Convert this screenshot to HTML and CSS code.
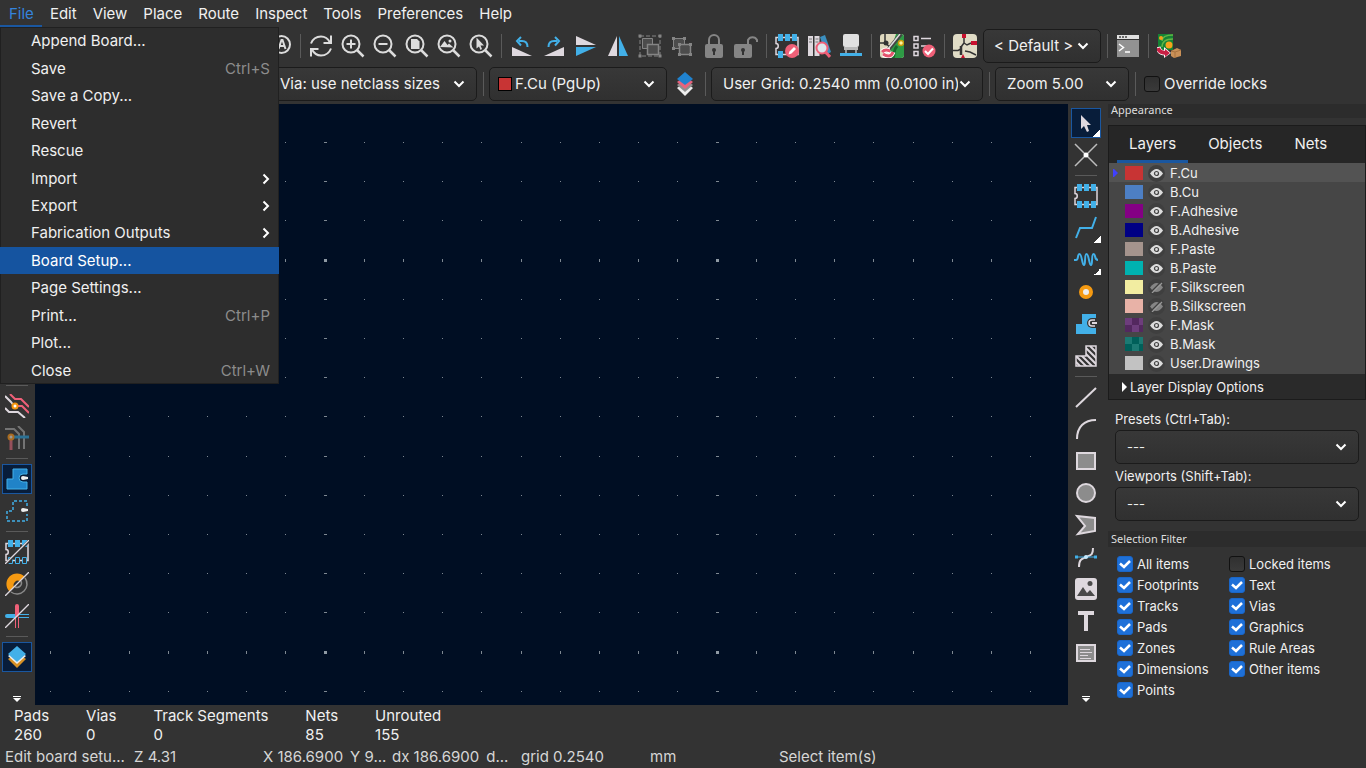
FILE: index.html
```
<!DOCTYPE html>
<html lang="en">
<head>
<meta charset="utf-8">
<title>PCB Editor</title>
<link rel="stylesheet" href="styles.css">
</head>
<body>
<div class="app">
  <nav class="menubar">
    <button class="menu-title open">File</button>
    <button class="menu-title">Edit</button>
    <button class="menu-title">View</button>
    <button class="menu-title">Place</button>
    <button class="menu-title">Route</button>
    <button class="menu-title">Inspect</button>
    <button class="menu-title">Tools</button>
    <button class="menu-title">Preferences</button>
    <button class="menu-title">Help</button>
    <div class="dropdown">
      <button class="item">Append Board...</button>
      <button class="item">Save<span class="key">Ctrl+S</span></button>
      <button class="item">Save a Copy...</button>
      <button class="item">Revert</button>
      <button class="item">Rescue</button>
      <button class="item">Import<svg class="sub" viewBox="0 0 8 12"><path d="M1.500 1.500 6 6l-4.500 4.500"/></svg></button>
      <button class="item">Export<svg class="sub" viewBox="0 0 8 12"><path d="M1.500 1.500 6 6l-4.500 4.500"/></svg></button>
      <button class="item">Fabrication Outputs<svg class="sub" viewBox="0 0 8 12"><path d="M1.500 1.500 6 6l-4.500 4.500"/></svg></button>
      <button class="item active">Board Setup...</button>
      <button class="item">Page Settings...</button>
      <button class="item">Print...<span class="key">Ctrl+P</span></button>
      <button class="item">Plot...</button>
      <button class="item">Close<span class="key">Ctrl+W</span></button>
    </div>
  </nav>

  <div class="toolbar main-tools">
    <button class="tool" aria-label="Find and replace"><svg viewBox="0 0 24 24" fill="none" stroke="#dcdcdc" stroke-width="2"><circle cx="13.500" cy="10.500" r="8.500"/><path d="M10.500 15l3-9h1l3 9M11.500 12h5M7 17l-5 5"/></svg></button>
    <span class="sep"></span>
    <button class="tool" aria-label="Refresh"><svg viewBox="0 0 24 24" fill="none" stroke="#dcdcdc" stroke-width="2"><path d="M2 9.500C4 4.500 8 2.500 12 2.500c4 0 7 2 9 6M22 1.500v7.500h-7.500M22 14.500c-2 5-6 7-10 7s-7-2-9-6M2 22.500V15h7.500"/></svg></button>
    <button class="tool" aria-label="Zoom in"><svg viewBox="0 0 24 24" fill="none" stroke="#dcdcdc" stroke-width="2"><circle cx="10" cy="10" r="8.500"/><path d="M10 5.500v9M5.500 10h9"/><path d="M16 16l6.500 6.500" stroke-width="2.500"/></svg></button>
    <button class="tool" aria-label="Zoom out"><svg viewBox="0 0 24 24" fill="none" stroke="#dcdcdc" stroke-width="2"><circle cx="10" cy="10" r="8.500"/><path d="M5.500 10h9"/><path d="M16 16l6.500 6.500" stroke-width="2.500"/></svg></button>
    <button class="tool" aria-label="Zoom to page"><svg viewBox="0 0 24 24" fill="none" stroke="#dcdcdc" stroke-width="2"><circle cx="10" cy="10" r="8.500"/><path d="M6 5h6l2.500 2.500V15H6z" fill="#dcdcdc" stroke="none"/><path d="M16 16l6.500 6.500" stroke-width="2.500"/></svg></button>
    <button class="tool" aria-label="Zoom to objects"><svg viewBox="0 0 24 24" fill="none" stroke="#dcdcdc" stroke-width="2"><circle cx="10" cy="10" r="8.500"/><path d="M3 13l4.500-6 3 4 1.500-1.500L16.500 13.500z" fill="#dcdcdc" stroke="none"/><circle cx="13" cy="7" r="1.500" fill="#dcdcdc" stroke="none"/><path d="M16 16l6.500 6.500" stroke-width="2.500"/></svg></button>
    <button class="tool" aria-label="Zoom to selection"><svg viewBox="0 0 24 24" fill="none" stroke="#dcdcdc" stroke-width="2"><circle cx="10" cy="10" r="8.500"/><path d="M7.500 3.500v11l2.500-2 1.500 3.500 1.500-1-1.500-3.500h3.500z" fill="#dcdcdc" stroke="none"/><path d="M16 16l6.500 6.500" stroke-width="2.500"/></svg></button>
    <span class="sep"></span>
    <button class="tool" aria-label="Rotate counterclockwise"><svg viewBox="0 0 24 24" fill="none"><path d="M2 13v9h20z" fill="#ded8de"/><path d="M9 7h3c4 0 5.500 2 5.500 6" stroke="#42b0e8" stroke-width="2"/><path d="M11 3L7 7l4 4.500" stroke="#42b0e8" stroke-width="2"/></svg></button>
    <button class="tool" aria-label="Rotate clockwise"><svg viewBox="0 0 24 24" fill="none"><path d="M22 13v9H2z" fill="#ded8de"/><path d="M15 7h-3c-4 0-5.500 2-5.500 6" stroke="#42b0e8" stroke-width="2"/><path d="M13 3l4 4-4 4.500" stroke="#42b0e8" stroke-width="2"/></svg></button>
    <button class="tool" aria-label="Mirror vertically"><svg viewBox="0 0 24 24"><path d="M2 2l20 9H2z" fill="#ded8de"/><path d="M2 13h20L2 22z" fill="#42b0e8"/></svg></button>
    <button class="tool" aria-label="Mirror horizontally"><svg viewBox="0 0 24 24"><path d="M11 2v20H2z" fill="#ded8de"/><path d="M13 2v20h9z" fill="#42b0e8"/></svg></button>
    <button class="tool" aria-label="Group"><svg viewBox="0 0 24 24" fill="#4c4c4c" stroke="#858585"><path d="M2 2h20v20H2z" fill="none" stroke-dasharray="4 2"/><path d="M4.500 4.500h10v10h-10z"/><path d="M9.500 10.500h11v10h-11z" stroke-width="1.500"/><path d="M.5.500h3v3h-3zM20.500.500h3v3h-3zM.5 20.500h3v3h-3zM20.500 20.500h3v3h-3z" fill="#858585" stroke="none"/></svg></button>
    <button class="tool" aria-label="Ungroup"><svg viewBox="0 0 24 24" fill="#4c4c4c" stroke="#858585"><path d="M3.500 4.500h11v10h-11z"/><path d="M9.500 10.500h11v10h-11z" stroke-width="1.500"/><path d="M2 3h3v3H2zM13 3h3v3h-3zM2 13h3v3H2zM8 9h3v3H8zM19 9h3v3h-3zM8 19h3v3H8zM19 19h3v3h-3z" fill="#858585" stroke="none"/></svg></button>
    <button class="tool" aria-label="Lock"><svg viewBox="0 0 24 24"><path d="M7 11V6a5 5 0 0 1 10 0v5" fill="none" stroke="#858585" stroke-width="2"/><rect x="3" y="10" width="18" height="14" rx="2" fill="#858585"/><circle cx="12" cy="16" r="2" fill="#333"/><path d="M11 16h2v5h-2z" fill="#333"/></svg></button>
    <button class="tool" aria-label="Unlock"><svg viewBox="0 0 24 24"><path d="M14 11V6a5 5 0 0 1 9 0v2" fill="none" stroke="#858585" stroke-width="2"/><rect x="0" y="10" width="18" height="14" rx="2" fill="#858585"/><circle cx="9" cy="16" r="2" fill="#333"/><path d="M8 16h2v5H8z" fill="#333"/></svg></button>
    <span class="sep"></span>
    <button class="tool" aria-label="Footprint editor"><svg viewBox="0 0 24 24"><path d="M1 3.500h22v17H1v-6c3 0 3-5 0-5z" fill="none" stroke="#ded8de" stroke-width="1.500"/><path d="M3 0h5v7H3zM10 0h5v7h-5zM17 0h5v7h-5zM3 17h5v7H3z" fill="#42b0e8"/><circle cx="17" cy="17" r="7" fill="#ef6078"/><path d="M13.500 20.500l1-3 4.500-4.500 2 2-4.500 4.500z" fill="#fff"/></svg></button>
    <button class="tool" aria-label="Footprint library browser"><svg viewBox="0 0 24 24"><path d="M1 2h5v20H1zM7.500 2h5v20h-5z" fill="#ded8de"/><path d="M2 5h3M2 8h3M8.500 5h3M8.500 8h3" stroke="#777"/><path d="M13 3l5-2 6 17-5 3z" fill="#3b8fc0"/><circle cx="15" cy="14" r="5.500" fill="#dce7ed" stroke="#ef6078" stroke-width="2"/><path d="M18.500 18l4.500 5" stroke="#ef6078" stroke-width="3"/></svg></button>
    <button class="tool" aria-label="3D viewer"><svg viewBox="0 0 24 24"><rect x="4" y="0" width="16" height="13" rx="2" fill="#e0e0e0"/><path d="M5 13h14v3H5z" fill="#b9b9b9"/><path d="M7 16v6M17 16v6" stroke="#b9b9b9" stroke-width="1.500"/><path d="M1 19h22v3H1z" fill="#42b0e8"/></svg></button>
    <span class="sep"></span>
    <button class="tool" aria-label="Update PCB from schematic"><svg viewBox="0 0 24 24"><rect width="24" height="24" rx="3" fill="#ded8bd"/><path d="M16 0h5a3 3 0 0 1 3 3v18a3 3 0 0 1-3 3H8z" fill="#2e9b45"/><path d="M17 12c-4 4-2 8-4 12" fill="none" stroke="#176b2a" stroke-width="3"/><path d="M5 0v9H0m5 0l5 4" fill="none" stroke="#333" stroke-width="1.500"/><circle cx="6" cy="9" r="2.500" fill="#333"/><path d="M21 0L8 16" stroke="#444" stroke-width="4"/><path d="M20 0L8 15" stroke="#ddd" stroke-width="1.500"/><circle cx="21" cy="9" r="2.500" fill="#fff3a0" stroke="#c89b0a" stroke-width="1.500"/><path d="M2 18c4-4 7-1 8-1M13 18c-2 6-7 4-10 2" fill="none" stroke="#fff" stroke-width="5"/><path d="M2 18c4-4 7-1 8-1M13 18c-2 6-7 4-10 2" fill="none" stroke="#e5536d" stroke-width="3"/></svg></button>
    <button class="tool" aria-label="Design rules checker"><svg viewBox="0 0 24 24" fill="none" stroke="#ded8de" stroke-width="1.500"><path d="M2 2.500h4v4H2zM2 10h4v4H2zM2 17.500h4v4H2zM9 4.500h10M9 12h6"/><circle cx="17" cy="17" r="6.500" fill="#ef6078" stroke="none"/><path d="M13 17l3 3 5-5.500" stroke="#fff" stroke-width="2"/></svg></button>
    <span class="sep"></span>
    <button class="tool" aria-label="Schematic editor"><svg viewBox="0 0 24 24"><rect width="24" height="24" rx="4" fill="#e0dcc6"/><path d="M11 4v5l-3 4M8 15l-3 1.500H0M12 17l5 1 6 3" fill="none" stroke="#333" stroke-width="1.500"/><path d="M8 12v9" stroke="#333" stroke-width="2.500"/><path d="M9 0h4v4H9zM18 7h6v4h-6z" fill="#c8102e"/><path d="M8 24l2-4 2 4z" fill="#c8102e"/><path d="M11 9l3 2 4-2" fill="none" stroke="#333" stroke-width="1.500"/></svg></button>
    <select class="combo variant" aria-label="Variant"><option>&lt; Default &gt;</option></select>
    <span class="sep"></span>
    <button class="tool" aria-label="Scripting console"><svg viewBox="0 0 24 24"><path d="M1 1h22v4H1z" fill="#e0e0e0"/><path d="M3 3h2M6 3h2M9 3h2" stroke="#444" stroke-width="1.500"/><path d="M1 6h22v17H1z" fill="#929292"/><path d="M3 10l4.500 3.500L3 17M9 18h5" fill="none" stroke="#fff" stroke-width="1.500"/></svg></button>
    <span class="sep"></span>
    <button class="tool" aria-label="Export package"><svg viewBox="0 0 24 24"><path d="M1 0h15v16H1z" fill="#168334"/><path d="M5 7c0-5 5-6 11-6M5 13c0-6 5-8 11-8" fill="none" stroke="#62b545" stroke-width="1.500"/><circle cx="4" cy="4" r="2" fill="#f5a21b"/><circle cx="12" cy="11" r="3.500" fill="#f5a21b"/><path d="M1 13c1 5 4 6 7 6" fill="none" stroke="#fff" stroke-width="5"/><path d="M7 13l7 6-7 5z" fill="#fff"/><path d="M1 14c1 4 4 5 8 5" fill="none" stroke="#c82045" stroke-width="4"/><path d="M8 15l5 4-5 4z" fill="#c82045"/><path d="M14 17l6-3 4 2v6l-7 2-3-2z" fill="#c99057"/><path d="M14 17l4 1 6-2M18 18v6" fill="none" stroke="#a87340"/></svg></button>
  </div>

  <div class="toolbar option-tools">
    <select class="combo via" aria-label="Via size"><option>Via: use netclass sizes</option></select>
    <span class="sep wide"></span>
    <span class="layer-combo">
      <select class="combo" aria-label="Active layer"><option>F.Cu (PgUp)</option></select>
      <span class="combo-swatch"></span>
    </span>
    <button class="tool" aria-label="Layer pair"><svg viewBox="0 0 24 24"><path d="M14 10l8 6-8 8-8-8z" fill="#eee"/><path d="M14 7l8 6-8 7-8-7z" fill="#8f8f8f"/><path d="M14 4l8 6-8 7-8-7z" fill="#e9637c"/><path d="M14 0l8 7-8 6-8-6z" fill="#2083d0"/></svg></button>
    <span class="sep wide"></span>
    <select class="combo grid" aria-label="Grid"><option>User Grid: 0.2540 mm (0.0100 in)</option></select>
    <span class="sep wide"></span>
    <select class="combo zoom" aria-label="Zoom"><option>Zoom 5.00</option></select>
    <span class="sep wide"></span>
    <label class="override"><input class="check" type="checkbox">Override locks</label>
  </div>

  <main class="workspace">
    <aside class="side left">
      <span class="hsep"></span>
      <button class="tool" aria-label="Show ratsnest"><svg viewBox="0 0 24 24" fill="none" stroke-width="2"><path d="M0 2l6 6 3 4M0 14l4 4h9l7 6" stroke="#ded8de"/><path d="M5 0l5 5h6l8 8M9 12h8l7 7" stroke="#ef6078"/><circle cx="10" cy="12" r="2.500" fill="#fff" stroke="#f5960f"/></svg></button>
      <button class="tool" aria-label="Curved ratsnest"><svg viewBox="0 0 24 24" fill="none" stroke-width="2"><path d="M0 3h9l5 5v15M13 0l6 6v17" stroke="#747474"/><path d="M6 12v12" stroke="#96505b" stroke-width="3"/><path d="M6 11h18" stroke="#2c7194" stroke-width="3"/><circle cx="6" cy="11" r="2.500" fill="#999" stroke="#a96c20"/></svg></button>
      <span class="hsep"></span>
      <button class="tool on" aria-label="Show filled zones"><svg viewBox="0 0 24 24"><path d="M8 2h14v5h-4a4 4 0 0 0 0 8h4v7H2V12h6z" fill="#2083c8" stroke="#42b0e8"/><path d="M18 9l5 1v2l-5 1a2 2 0 0 1 0-4z" fill="#eee"/></svg></button>
      <button class="tool" aria-label="Show zone outlines"><svg viewBox="0 0 24 24"><path d="M22 7V2H8v10H2v10h20v-7" fill="none" stroke="#42b0e8" stroke-width="1.500" stroke-dasharray="3 2"/><path d="M18 9l5 1v2l-5 1a2 2 0 0 1 0-4z" fill="#eee"/></svg></button>
      <span class="hsep"></span>
      <button class="tool" aria-label="Sketch footprints"><svg viewBox="0 0 24 24"><path d="M1 3.500h22v17H1v-6c3 0 3-5 0-5z" fill="none" stroke="#ded8de" stroke-width="1.500"/><path d="M3 0h5v7H3zM10 0h5v7h-5zM17 0h5v7h-5z" fill="#42b0e8"/><path d="M3.500 17.500h4v6h-4zM10.500 17.500h4v6h-4zM17.500 17.500h4v6h-4z" fill="#333" stroke="#42b0e8"/><path d="M1 24L24 1" stroke="#333" stroke-width="3"/><path d="M0 24L24 0" stroke="#ded8de" stroke-width="1.300"/></svg></button>
      <button class="tool" aria-label="Sketch vias"><svg viewBox="0 0 24 24"><path d="M4.500 19.500a10 10 0 0 1 15-15L15 9a4.500 4.500 0 0 0-6 6z" fill="#f59a12"/><path d="M20 6A10 10 0 0 1 6 20M16 9a4.500 4.500 0 0 1-6 6" fill="none" stroke="#898989" stroke-width="1.500"/><path d="M0 24L24 0" stroke="#ded8de" stroke-width="1.300"/></svg></button>
      <button class="tool" aria-label="Sketch tracks"><svg viewBox="0 0 24 24"><path d="M2 12h8" stroke="#42b0e8" stroke-width="4" stroke-linecap="round"/><path d="M12 2v9" stroke="#ef6078" stroke-width="4" stroke-linecap="round"/><path d="M13 10.500h11M13 13.500h11" stroke="#42b0e8"/><path d="M10.500 13v11M13.500 13v11" stroke="#ef6078"/><path d="M0 24L24 0" stroke="#ded8de" stroke-width="1.300"/></svg></button>
      <span class="hsep"></span>
      <button class="tool on" aria-label="Show appearance manager"><svg viewBox="0 0 24 24"><path d="M12 8l9 6-9 9-9-9z" fill="#d69125"/><path d="M12 5l9 6-9 8-9-8z" fill="#eee"/><path d="M12 1l9 8-9 8-9-8z" fill="#42b0e8"/></svg></button>
      <button class="more" aria-label="More tools"><svg viewBox="0 0 8 6"><path d="M0 0h8v1H0zM0 2h8L4 6z" fill="#fff"/></svg></button>
    </aside>

    <section class="board"><canvas id="board-grid" aria-label="Board drawing area"></canvas></section>

    <aside class="side right">
      <button class="tool on corner" aria-label="Select"><svg viewBox="0 0 24 24"><path d="M7 4v14l3-3 3 6 2-1-2-6h4z" fill="#ded8de"/></svg></button>
      <button class="tool" aria-label="Local ratsnest"><svg viewBox="0 0 24 24"><path d="M1 1l22 22M23 1L1 23" stroke="#bdbdbd" stroke-width="1.500"/><circle cx="12" cy="12" r="2.500" fill="#fff"/></svg></button>
      <span class="hsep"></span>
      <button class="tool" aria-label="Place footprints"><svg viewBox="0 0 24 24"><path d="M1 3.500h22v17H1v-6c3 0 3-5 0-5z" fill="none" stroke="#ded8de" stroke-width="1.500"/><path d="M3 0h5v7H3zM10 0h5v7h-5zM17 0h5v7h-5zM3 17h5v7H3zM10 17h5v7h-5zM17 17h5v7h-5z" fill="#42b0e8"/></svg></button>
      <button class="tool corner" aria-label="Route tracks"><svg viewBox="0 0 24 24"><path d="M2 22l4-10h12l4-11" fill="none" stroke="#42b0e8" stroke-width="2"/></svg></button>
      <button class="tool corner" aria-label="Tune length"><svg viewBox="0 0 24 24"><path d="M0 12h2c3 0 1-6 3.500-6S8 17 10 17 10 6 12.500 6 15 17 17 17s0-11 2.500-11S20 12 24 12" fill="none" stroke="#42b0e8" stroke-width="2"/></svg></button>
      <button class="tool" aria-label="Place vias"><svg viewBox="0 0 24 24"><circle cx="12" cy="12" r="5" fill="#eee" stroke="#f59a12" stroke-width="4"/></svg></button>
      <button class="tool" aria-label="Draw zones"><svg viewBox="0 0 24 24"><path d="M8 2h14v20H2V12h6z" fill="#42b0e8"/><path d="M22 6h-4a5 5 0 0 0 0 10h4z" fill="#333"/><path d="M21 8h-3a3 3 0 0 0 0 6h3" fill="none" stroke="#ded8de" stroke-width="1.500"/><path d="M18 10h5v2h-5z" fill="#ded8de"/></svg></button>
      <button class="tool" aria-label="Draw rule areas"><svg viewBox="0 0 24 24"><defs><clipPath id="area"><path d="M12 2h10v20H2V12h10z"/></clipPath></defs><g clip-path="url(#area)" stroke="#ded8de" stroke-width="2"><path d="M0 10l16 16M0 16l10 10M2 6l20 20M6 4l20 20M10 2l16 16M16 2l10 10"/></g><path d="M12 2h10v20H2V12h10z" fill="none" stroke="#ded8de" stroke-width="1.500"/></svg></button>
      <span class="hsep"></span>
      <button class="tool" aria-label="Draw lines"><svg viewBox="0 0 24 24"><path d="M2 22L22 3" stroke="#ded8de" stroke-width="2"/></svg></button>
      <button class="tool" aria-label="Draw arcs"><svg viewBox="0 0 24 24"><path d="M3 22C3 10 10 3 22 3" fill="none" stroke="#ded8de" stroke-width="2"/></svg></button>
      <button class="tool" aria-label="Draw rectangles"><svg viewBox="0 0 24 24"><path d="M3 4h18v16H3z" fill="#8c8c8c" stroke="#ded8de" stroke-width="2"/></svg></button>
      <button class="tool" aria-label="Draw circles"><svg viewBox="0 0 24 24"><circle cx="12" cy="12" r="9" fill="#8c8c8c" stroke="#ded8de" stroke-width="2"/></svg></button>
      <button class="tool" aria-label="Draw polygons"><svg viewBox="0 0 24 24"><path d="M3 3l18 2v13L4 21l7-8z" fill="#8c8c8c" stroke="#ded8de" stroke-width="2"/></svg></button>
      <button class="tool" aria-label="Draw bezier curves"><svg viewBox="0 0 24 24"><path d="M5 22c0-7 2-8 7-10s7-2 7-9" fill="none" stroke="#ded8de" stroke-width="2"/><path d="M2 12h20" stroke="#42b0e8"/><path d="M1 10.500h3v3H1zM20 10.500h3v3h-3z" fill="#42b0e8"/><circle cx="12" cy="12" r="2" fill="#c4eaff"/></svg></button>
      <button class="tool" aria-label="Place images"><svg viewBox="0 0 24 24"><rect x="1" y="1" width="22" height="22" rx="3" fill="#ded8de"/><path d="M3 19l6-9 4 6 3-3 5 6z" fill="#4a4a4a"/><circle cx="16" cy="6.500" r="2.500" fill="#4a4a4a"/></svg></button>
      <button class="tool" aria-label="Draw text"><svg viewBox="0 0 24 24"><path d="M4 4h16M12 4v18" fill="none" stroke="#ded8de" stroke-width="4"/></svg></button>
      <button class="tool" aria-label="Draw text boxes"><svg viewBox="0 0 24 24"><path d="M3 4h18v16H3z" fill="#8c8c8c" stroke="#ded8de" stroke-width="2"/><path d="M6 8.500h10M6 11.500h12M6 14.500h8M6 17.500h11" stroke="#ded8de"/></svg></button>
      <button class="more" aria-label="More tools"><svg viewBox="0 0 8 6"><path d="M0 0h8v1H0zM0 2h8L4 6z" fill="#fff"/></svg></button>
    </aside>

    <aside class="panel">
      <h2 class="caption">Appearance</h2>
      <div class="notebook">
        <div class="tabs"><button class="tab current">Layers</button><button class="tab">Objects</button><button class="tab">Nets</button></div>
        <ul class="layers">
          <li class="layer selected"><span class="swatch f-cu"></span><button class="eye" aria-label="Hide layer"></button>F.Cu</li>
          <li class="layer"><span class="swatch b-cu"></span><button class="eye" aria-label="Hide layer"></button>B.Cu</li>
          <li class="layer"><span class="swatch f-adhesive"></span><button class="eye" aria-label="Hide layer"></button>F.Adhesive</li>
          <li class="layer"><span class="swatch b-adhesive"></span><button class="eye" aria-label="Hide layer"></button>B.Adhesive</li>
          <li class="layer"><span class="swatch f-paste"></span><button class="eye" aria-label="Hide layer"></button>F.Paste</li>
          <li class="layer"><span class="swatch b-paste"></span><button class="eye" aria-label="Hide layer"></button>B.Paste</li>
          <li class="layer"><span class="swatch f-silk"></span><button class="eye off" aria-label="Show layer"></button>F.Silkscreen</li>
          <li class="layer"><span class="swatch b-silk"></span><button class="eye off" aria-label="Show layer"></button>B.Silkscreen</li>
          <li class="layer"><span class="swatch f-mask"></span><button class="eye" aria-label="Hide layer"></button>F.Mask</li>
          <li class="layer"><span class="swatch b-mask"></span><button class="eye" aria-label="Hide layer"></button>B.Mask</li>
          <li class="layer"><span class="swatch drawings"></span><button class="eye" aria-label="Hide layer"></button>User.Drawings</li>
        </ul>
        <button class="expander"><svg viewBox="0 0 5 10"><path d="M0 0l5 5-5 5z" fill="#fff"/></svg>Layer Display Options</button>
      </div>
      <div class="views">
        <label for="presets">Presets (Ctrl+Tab):</label>
        <select class="combo" id="presets"><option>---</option></select>
        <label for="viewports">Viewports (Shift+Tab):</label>
        <select class="combo" id="viewports"><option>---</option></select>
      </div>
      <h2 class="caption">Selection Filter</h2>
      <div class="filter">
        <label><input class="check" type="checkbox" checked>All items</label>
        <label><input class="check" type="checkbox">Locked items</label>
        <label><input class="check" type="checkbox" checked>Footprints</label>
        <label><input class="check" type="checkbox" checked>Text</label>
        <label><input class="check" type="checkbox" checked>Tracks</label>
        <label><input class="check" type="checkbox" checked>Vias</label>
        <label><input class="check" type="checkbox" checked>Pads</label>
        <label><input class="check" type="checkbox" checked>Graphics</label>
        <label><input class="check" type="checkbox" checked>Zones</label>
        <label><input class="check" type="checkbox" checked>Rule Areas</label>
        <label><input class="check" type="checkbox" checked>Dimensions</label>
        <label><input class="check" type="checkbox" checked>Other items</label>
        <label><input class="check" type="checkbox" checked>Points</label>
      </div>
    </aside>
  </main>

  <dl class="counts">
    <div><dt>Pads</dt><dd>260</dd></div>
    <div><dt>Vias</dt><dd>0</dd></div>
    <div><dt>Track Segments</dt><dd>0</dd></div>
    <div><dt>Nets</dt><dd>85</dd></div>
    <div><dt>Unrouted</dt><dd>155</dd></div>
  </dl>

  <footer class="status">
    <span>Edit board setu...</span>
    <span>Z 4.31</span>
    <span class="pair"><span>X 186.6900</span><span>Y 9...</span></span>
    <span class="pair"><span>dx 186.6900</span><span>d...</span></span>
    <span>grid 0.2540</span>
    <span>mm</span>
    <span>Select item(s)</span>
  </footer>
</div>
<script src="grid.js"></script>
</body>
</html>
```
FILE: styles.css
```
* { box-sizing: border-box; }

body {
  margin: 0;
  background: #333;
  color: #f0f0f0;
  font: 15px/20px Inter, sans-serif;
}

button, select, input {
  margin: 0;
  padding: 0;
  border: 0;
  background: none;
  color: inherit;
  font: inherit;
}

.app {
  display: grid;
  grid-template-rows: 28px 36px 40px 1fr 40px 23px;
  height: 100vh;
  min-height: 700px;
}

/* Menu bar */
.menubar { display: flex; position: relative; z-index: 5; }
.menu-title { height: 28px; padding: 2px 8px 0; border-bottom: 3px solid transparent; }
.menu-title.open { padding-left: 9px; color: #3584dc; border-color: #1a57a0; }

.dropdown {
  position: absolute;
  top: 27px;
  left: 0;
  width: 279px;
  height: 357px;
  display: grid;
  grid-auto-rows: 1fr;
  background: #2d2d2d;
  box-shadow: inset 0 0 0 1px #202020;
}
.item {
  display: flex;
  align-items: center;
  justify-content: space-between;
  padding: 1px 9px 0 31px;
  text-align: left;
}
.item.active { background: #1554a0; color: #fff; }
.key { color: #8c8c8c; }
.sub { width: 8px; height: 12px; fill: none; stroke: #fff; stroke-width: 2; }

/* Toolbars */
.toolbar { display: flex; align-items: center; }
.main-tools { padding-left: 264px; }
.option-tools { padding-left: 269px; }
.tool {
  flex: none;
  display: grid;
  place-items: center;
  width: 32px;
  height: 32px;
}
.tool svg { width: 24px; height: 24px; }
.sep { flex: none; width: 1px; height: 24px; margin: 0 4px; background: #5a5a5a; }
.sep.wide { margin: 0 5px 0 6px; }

.combo {
  appearance: none;
  height: 34px;
  padding: 0 24px 0 11px;
  border: 1px solid #1b1b1b;
  border-radius: 5px;
  background: url("data:image/svg+xml,%3Csvg xmlns='http://www.w3.org/2000/svg' width='12' height='8'%3E%3Cpath d='M1.500 1.500 6 6l4.500-4.500' fill='none' stroke='white' stroke-width='2'/%3E%3C/svg%3E") no-repeat right 11px center, linear-gradient(#383838, #303030);
}
.variant { width: 118px; margin: 0 2px; padding-left: 10px; }
.via { width: 208px; padding-left: 10px; }
.grid { width: 272px; }
.zoom { width: 134px; }
.layer-combo { position: relative; }
.layer-combo .combo { width: 178px; padding-left: 25px; }
.combo-swatch {
  position: absolute;
  left: 9px;
  top: 10px;
  width: 14px;
  height: 14px;
  border: 1px solid #000;
  background: #c83434;
  pointer-events: none;
}
.override { display: flex; align-items: center; gap: 4px; margin-left: 3px; }

.check {
  appearance: none;
  flex: none;
  width: 16px;
  height: 16px;
  border: 1px solid #111;
  border-radius: 3px;
  background: linear-gradient(#303030, #3a3a3a);
}
.check:checked {
  border-color: #1a66c8;
  background: url("data:image/svg+xml,%3Csvg xmlns='http://www.w3.org/2000/svg' width='14' height='14'%3E%3Cpath d='M2 6.500 6 10l6-6' fill='none' stroke='white' stroke-width='2.500'/%3E%3C/svg%3E") center, #1e70d8;
}

/* Workspace */
.workspace {
  display: grid;
  grid-template-columns: 35px 1fr 36px 262px;
  min-height: 0;
}
.side { display: flex; flex-direction: column; align-items: center; min-height: 0; }
.left { justify-content: flex-end; padding-right: 1px; }
.right { padding-top: 3px; }
.hsep { flex: none; width: 22px; height: 1px; margin: 4px 0; background: #5a5a5a; }
.side .tool.on {
  width: 30px;
  height: 30px;
  margin: 1px 0;
  border: 1px solid #1a57a0;
  background: #081d3a;
}
.corner {
  background: linear-gradient(135deg, transparent 50%, #fff 50%) no-repeat right 1px bottom 1px / 7px 7px;
}
.side .tool.on.corner {
  background: linear-gradient(135deg, transparent 50%, #fff 50%) no-repeat right bottom / 7px 7px, #081d3a;
}
.more { display: flex; align-items: flex-end; height: 32px; padding-bottom: 3px; margin-top: auto; }
.left .more { margin-top: 0; }
.more svg { width: 8px; height: 6px; }

.board { background: #000e23; min-width: 0; min-height: 0; overflow: hidden; }
.board canvas { display: block; width: 100%; height: 100%; }

/* Appearance panel */
.panel { padding-left: 4px; font-size: 13px; min-height: 0; overflow: hidden; }
.caption {
  margin: 0;
  padding: 0 3px;
  background: #2c2c2c;
  color: #dedede;
  font: 11px/16px "Noto Sans", sans-serif;
}
.caption:first-child { line-height: 12px; padding-bottom: 2px; }
.notebook { margin-top: 7px; border: 1px solid #1b1b1b; background: #2a2a2a; }
.tabs { display: flex; gap: 8px; height: 37px; padding-left: 8px; background: #262626; font-size: 15px; }
.tab { padding: 1px 12px 0; border-bottom: 3px solid transparent; }
.tab.current { border-color: #1a57a0; }
.layers { margin: 0; padding: 0 0 2px; list-style: none; background: #464646; }
.layer {
  display: flex;
  align-items: center;
  gap: 5px;
  height: 19px;
  padding: 1px 4px 0 16px;
  background: no-repeat left 4px center;
}
.layer.selected {
  background-color: #535353;
  background-image: url("data:image/svg+xml,%3Csvg xmlns='http://www.w3.org/2000/svg' width='5' height='8'%3E%3Cpath d='M0 0h1l4 4-4 4H0z' fill='%234040ff'/%3E%3C/svg%3E");
}
.swatch { width: 18px; height: 14px; }
.f-cu { background: #c83434; }
.b-cu { background: #4d7fc4; }
.f-adhesive { background: #840084; }
.b-adhesive { background: #000084; }
.f-paste { background: #a5948d; }
.b-paste { background: #00b2b0; }
.f-silk { background: #f2eda1; }
.b-silk { background: #e8b2a7; }
.f-mask { background: repeating-conic-gradient(#53285f 0 25%, #6d3d7c 0 50%) 0 0 / 14px 14px; }
.b-mask { background: repeating-conic-gradient(#1c7a73 0 25%, #00605a 0 50%) 7px 0 / 14px 14px; }
.drawings { background: #c2c2c2; }
.eye {
  width: 17px;
  height: 17px;
  border-radius: 50%;
  background: url("data:image/svg+xml,%3Csvg xmlns='http://www.w3.org/2000/svg' width='15' height='11'%3E%3Cpath d='M1 5.500q6.500-9 13 0q-6.500 9-13 0z' fill='%23ddd'/%3E%3Ccircle cx='7.500' cy='5.500' r='2' fill='none' stroke='%23444' stroke-width='1.200'/%3E%3C/svg%3E") no-repeat center, #3f3f3f;
}
.eye.off {
  background-image: url("data:image/svg+xml,%3Csvg xmlns='http://www.w3.org/2000/svg' width='15' height='11'%3E%3Cpath d='M1 5.500q6.500-9 13 0q-6.500 9-13 0z' fill='%23858585'/%3E%3Cpath d='M2 10l9-9' stroke='%233f3f3f' stroke-width='1.500'/%3E%3Cpath d='M3 11l10-10' stroke='%23999' stroke-width='1.200'/%3E%3C/svg%3E");
}
.expander { display: flex; align-items: center; gap: 3px; width: 100%; height: 25px; padding-left: 13px; }
.expander svg { width: 5px; height: 10px; }

.views { display: grid; padding: 9px 7px 8px; }
.views label { line-height: 21px; }
.views .combo { width: 100%; margin-bottom: 2px; }

.filter { display: grid; grid-template-columns: 112px 1fr; grid-auto-rows: 21px; padding: 6px 9px 0; }
.filter label { display: flex; align-items: center; gap: 4px; }

/* Bottom bars */
.counts { display: flex; gap: 37px; margin: 0; padding: 1px 14px; line-height: 19px; }
.counts dd { margin: 0; }
.status {
  display: grid;
  grid-template-columns: repeat(6, 129px) 1fr;
  padding-left: 5px;
  color: #d6d6d6;
  line-height: 23px;
  white-space: nowrap;
}
.pair { display: flex; gap: 7px; }
```
FILE: grid.js
```
const canvas = document.getElementById("board-grid");

function drawGrid() {
  const width = canvas.clientWidth;
  const height = canvas.clientHeight;
  canvas.width = width;
  canvas.height = height;
  const ctx = canvas.getContext("2d");
  const pitch = 39.2;
  const originX = 290;
  const originY = 156;
  for (let i = Math.ceil(-originX / pitch); originX + i * pitch < width; i++) {
    for (let j = Math.ceil(-originY / pitch); originY + j * pitch < height; j++) {
      const x = Math.floor(originX + i * pitch);
      const y = Math.floor(originY + j * pitch);
      const majorX = i % 10 === 0;
      const majorY = j % 10 === 0;
      ctx.fillStyle = majorX && majorY ? "#8f9aa4" : "#7e8892";
      ctx.fillRect(majorX ? x - 1 : x, majorY ? y - 1 : y, majorX ? 3 : 1, majorY ? 3 : 1);
    }
  }
}

drawGrid();
window.addEventListener("resize", drawGrid);
```
